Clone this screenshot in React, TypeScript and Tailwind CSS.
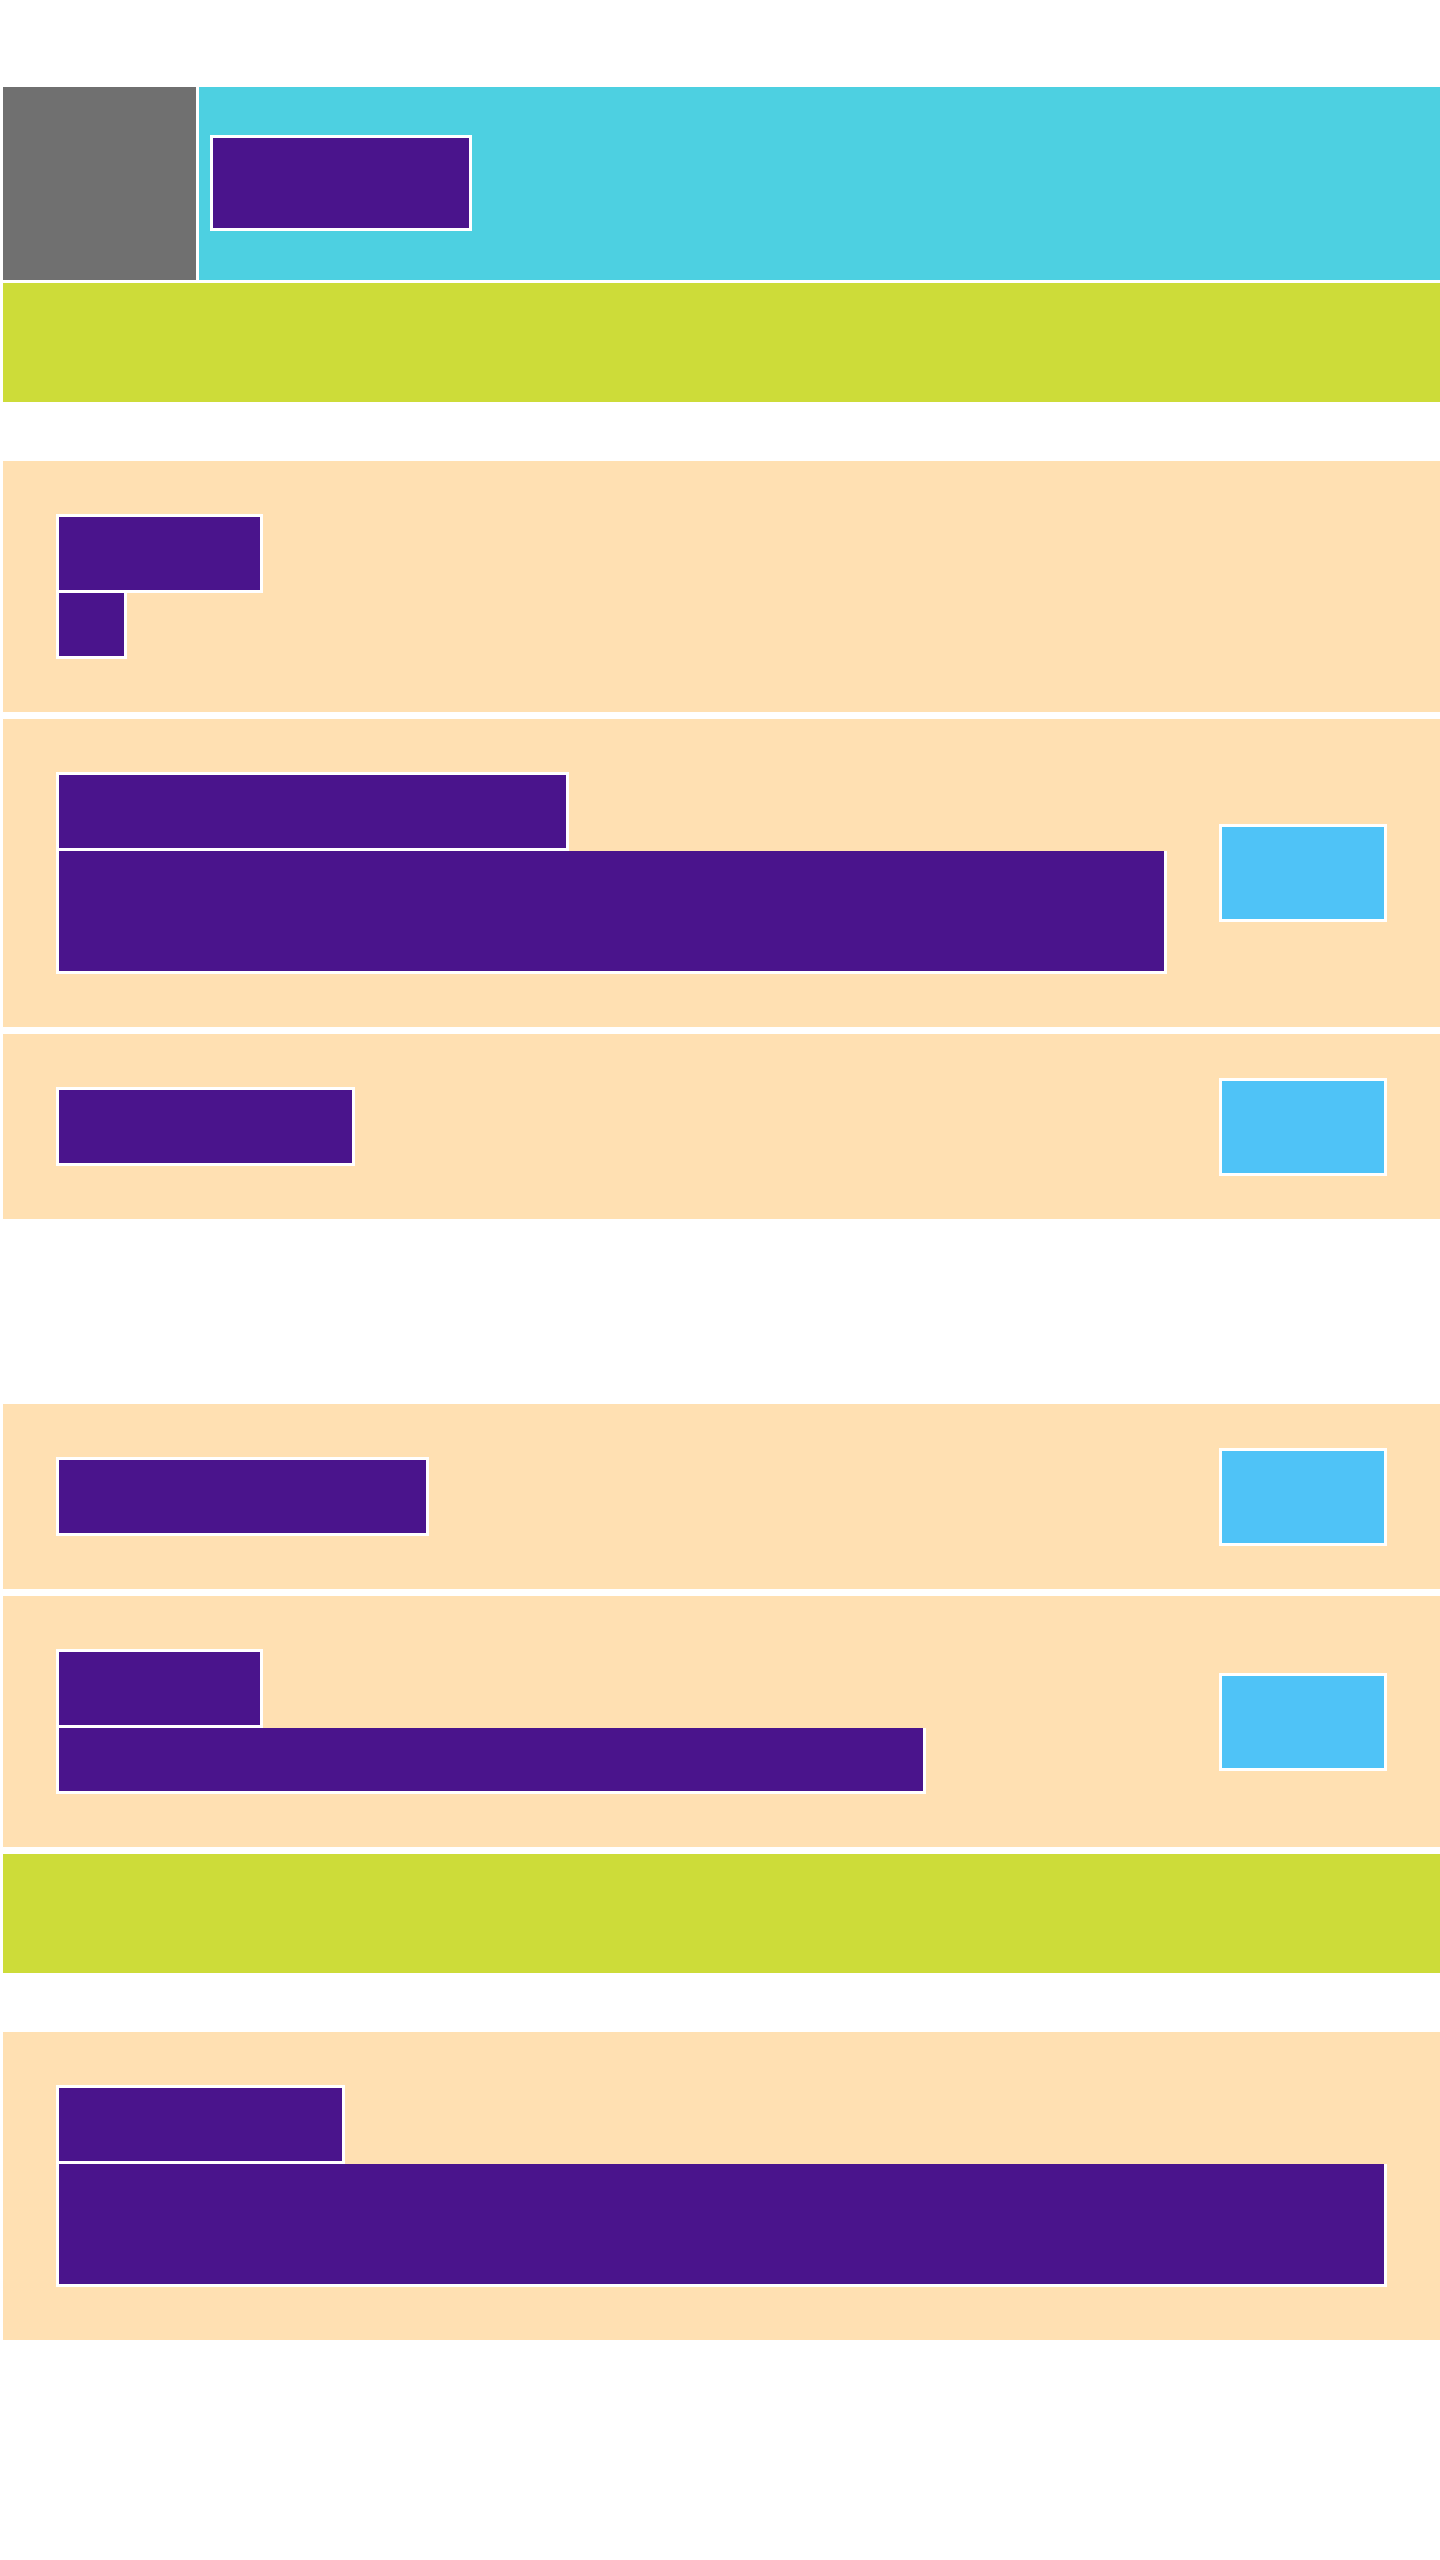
import React from 'react'

// Wireframe-style page: header strip, banners and list cards

function Block({ w, h, last }: { w: number; h: number; last?: boolean }) {
  return (
    <div
      className={`bg-[#4a148c] border-[3px] border-white ${last ? 'border-t-0' : ''}`}
      style={{ width: w, height: h }}
    />
  )
}

function Action() {
  // taller than a single line, but doesn't push the card height
  return <div className="w-[168px] h-[98px] -my-[10px] shrink-0 bg-[#4fc3f7] border-[3px] border-white" />
}

function Card({
  lines,
  action,
  className = '',
}: {
  lines: { w: number; h: number }[]
  action?: boolean
  className?: string
}) {
  return (
    <div className={`flex items-center justify-between bg-[#ffe0b2] p-[53px] ${className}`}>
      <div className="flex flex-col">
        {lines.map((l, i) => (
          <Block key={i} w={l.w} h={l.h} last={i > 0} />
        ))}
      </div>
      {action && <Action />}
    </div>
  )
}

export default function App() {
  return (
    <div className="min-h-[2560px] bg-white pt-[87px] pl-[3px] font-['Liberation_Sans',sans-serif]">
      {/* Header */}
      <div className="flex h-[193px] gap-[3px]">
        <div className="w-[193px] bg-[#707070]" />
        <div className="flex-1 bg-[#4dd0e1] pl-[11px] pt-[48px]">
          <div className="w-[262px] h-[96px] bg-[#4a148c] border-[3px] border-white" />
        </div>
      </div>
      <div className="mt-[3px] h-[119px] bg-[#cddc39]" />

      {/* First list */}
      <div className="mt-[59px] flex flex-col gap-[7px]">
        <Card lines={[{ w: 207, h: 79 }, { w: 71, h: 66 }]} />
        <Card lines={[{ w: 513, h: 79 }, { w: 1111, h: 123 }]} action />
        <Card lines={[{ w: 299, h: 79 }]} action />
      </div>

      {/* Second list */}
      <div className="mt-[185px] flex flex-col gap-[7px]">
        <Card lines={[{ w: 373, h: 79 }]} action />
        <Card lines={[{ w: 207, h: 79 }, { w: 870, h: 66 }]} action />
        <div className="h-[119px] bg-[#cddc39]" />
      </div>

      <div className="mt-[59px]">
        <Card lines={[{ w: 289, h: 79 }, { w: 1331, h: 123 }]} />
      </div>
    </div>
  )
}
